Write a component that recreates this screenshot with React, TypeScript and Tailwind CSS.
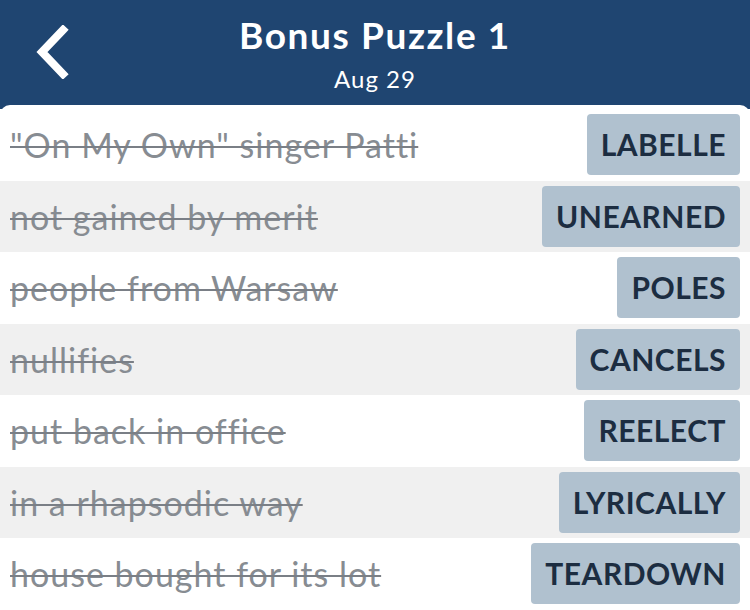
import React from 'react';

const clues = [
  { clue: '"On My Own" singer Patti', answer: 'LABELLE' },
  { clue: 'not gained by merit', answer: 'UNEARNED' },
  { clue: 'people from Warsaw', answer: 'POLES' },
  { clue: 'nullifies', answer: 'CANCELS' },
  { clue: 'put back in office', answer: 'REELECT' },
  { clue: 'in a rhapsodic way', answer: 'LYRICALLY' },
  { clue: 'house bought for its lot', answer: 'TEARDOWN' },
];

export default function App() {
  return (
    <div className="w-[750px] h-[610px] overflow-hidden bg-[#1f4571] flex flex-col" style={{ fontFamily: 'Lato, "Open Sans", sans-serif' }}>
      <div className="relative h-[105px] flex-shrink-0 flex flex-col items-center text-white">
        <button className="absolute left-[32px] top-[25px] w-[40px] h-[54px] flex items-center justify-center">
          <svg viewBox="0 0 40 54" className="w-[40px] h-[54px]">
            <path d="M31 5 L10 27 L31 49" fill="none" stroke="white" strokeWidth="8" strokeLinecap="square" strokeLinejoin="miter" />
          </svg>
        </button>
        <h1 className="mt-[13px] text-[37px] leading-[44px] font-bold tracking-[1.6px]">Bonus Puzzle 1</h1>
        <p className="mt-[9px] text-[24px] leading-[26px] tracking-[1px]">Aug 29</p>
      </div>
      <div className="flex-1 bg-white rounded-t-[10px] pt-[4px]">
        {clues.map((c, i) => (
          <div key={c.answer} className={`h-[71.5px] flex items-center justify-between pl-[10px] pr-[10px] ${i % 2 === 1 ? 'bg-[#f0f0f0]' : 'bg-white'}`}>
            <span className="text-[34px] tracking-[1px] text-[#878c92] line-through decoration-[#7a7f86] decoration-2">{c.clue}</span>
            <span className="h-[61px] px-[14px] flex items-center rounded-[4px] bg-[#b0c1cf] text-[#1c2d41] text-[30px] font-bold tracking-[0.5px]">{c.answer}</span>
          </div>
        ))}
      </div>
    </div>
  );
}
